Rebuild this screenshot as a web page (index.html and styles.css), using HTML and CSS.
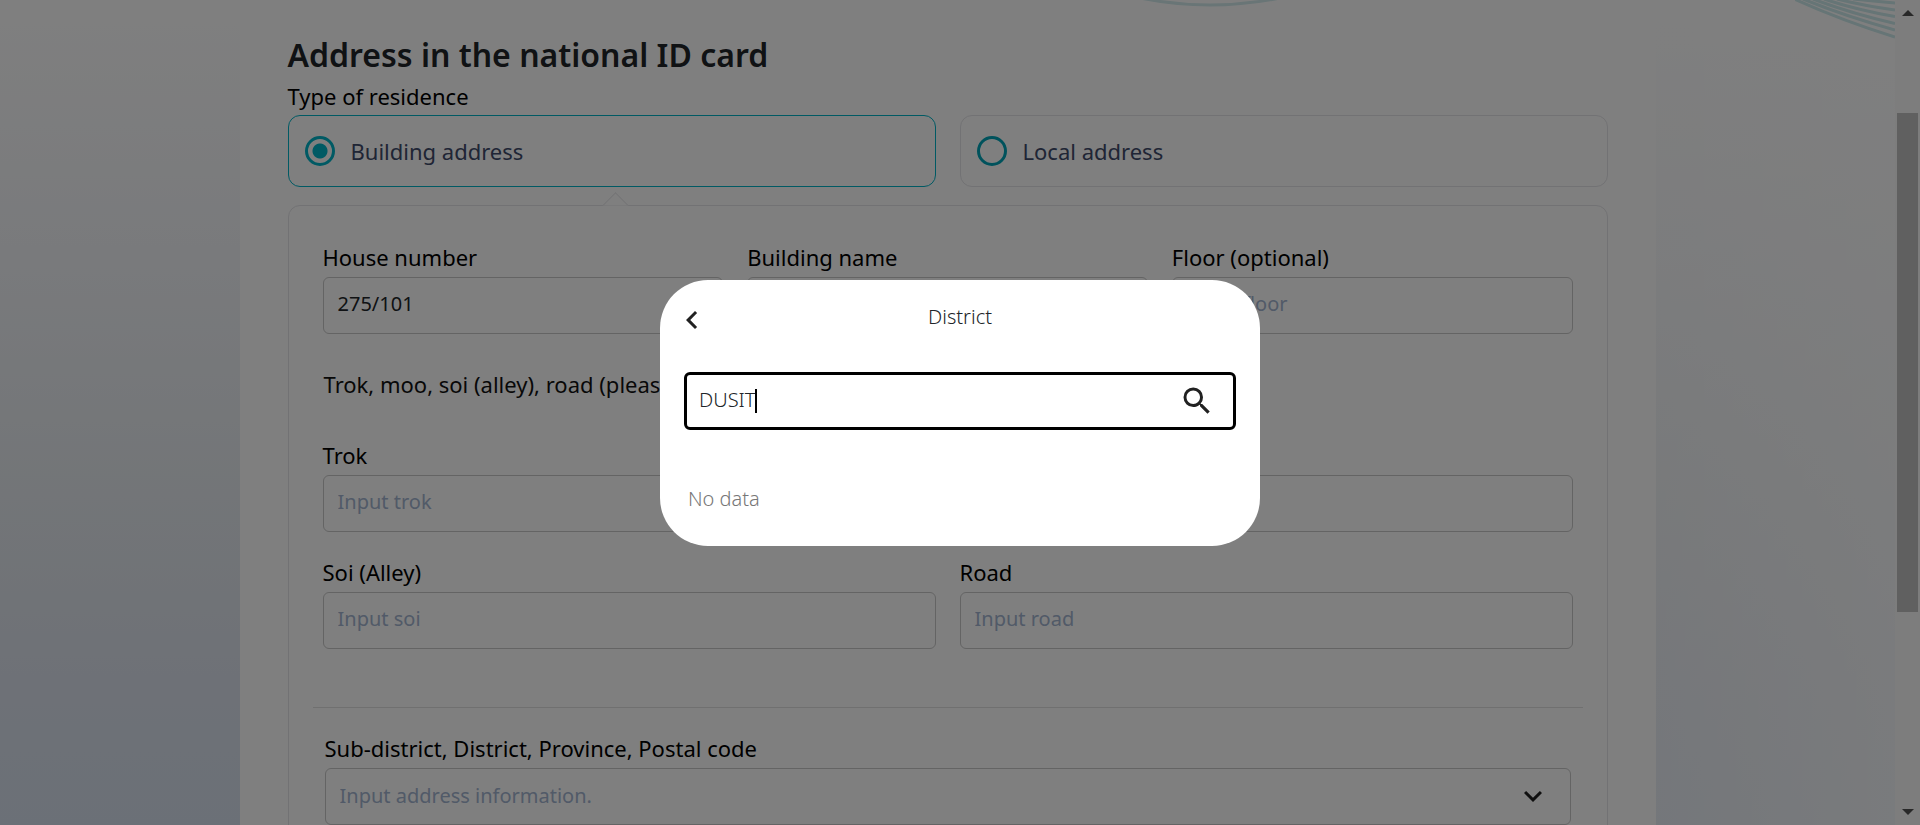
FILE: index.html
```html
<!DOCTYPE html>
<html lang="en">
<head>
<meta charset="utf-8">
<title>Address in the national ID card</title>
<link rel="stylesheet" href="styles.css">
</head>
<body>
<div class="page">
  <svg class="waves" width="100" height="40" viewBox="0 0 100 40" aria-hidden="true">
    <path d="M-3 -2Q45 20 100 37M8 -1Q50 16 100 30M18 -1Q55 13 100 23.500M29 -1Q62 10 100 16.500M42 -1Q70 6 100 10M58 -1Q78 1 100 3"/>
  </svg>
  <main class="card">
    <svg class="arc" width="140" height="8" viewBox="0 0 140 8" aria-hidden="true"><path d="M0 -2Q70 12 140 -2"/></svg>
    <form class="form">
      <h1 class="title">Address in the national ID card</h1>
      <fieldset class="residence">
        <legend class="label">Type of residence</legend>
        <div class="choices">
          <label class="choice choice-on"><input class="radio" type="radio" name="residence" checked>Building address</label>
          <label class="choice"><input class="radio" type="radio" name="residence">Local address</label>
        </div>
      </fieldset>
      <section class="panel">
        <div class="row">
          <div class="field"><label class="label" for="house">House number</label><input class="input" id="house" value="275/101"></div>
          <div class="field"><label class="label" for="building">Building name</label><input class="input" id="building"></div>
          <div class="field"><label class="label" for="floor">Floor (optional)</label><input class="input" id="floor" placeholder="Input floor"></div>
        </div>
        <p class="note">Trok, moo, soi (alley), road (please fill at least 1)</p>
        <div class="row">
          <div class="field"><label class="label" for="trok">Trok</label><input class="input" id="trok" placeholder="Input trok"></div>
          <div class="field"><label class="label" for="moo">Moo</label><input class="input" id="moo" placeholder="Input moo"></div>
        </div>
        <div class="row row-next">
          <div class="field"><label class="label" for="soi">Soi (Alley)</label><input class="input" id="soi" placeholder="Input soi"></div>
          <div class="field"><label class="label" for="road">Road</label><input class="input" id="road" placeholder="Input road"></div>
        </div>
        <hr class="rule">
        <div class="field area">
          <label class="label" for="area">Sub-district, District, Province, Postal code</label>
          <div class="select-wrap">
            <select class="input select" id="area"><option>Input address information.</option></select>
            <svg class="icon select-icon" viewBox="0 0 24 24" aria-hidden="true"><path d="M16.590 8.590 12 13.170 7.410 8.590 6 10l6 6 6-6z"/></svg>
          </div>
        </div>
      </section>
    </form>
  </main>
</div>
<div class="scrollbar" aria-hidden="true">
  <span class="arrow-up"></span><span class="thumb"></span><span class="arrow-down"></span>
</div>
<div class="overlay">
  <section class="modal" role="dialog" aria-labelledby="modal-title">
    <header class="modal-head">
      <button class="back" type="button" aria-label="Back"><svg class="icon" viewBox="0 0 24 24"><path d="M15.410 7.410 14 6l-6 6 6 6 1.410-1.410L10.830 12z"/></svg></button>
      <h2 class="modal-title" id="modal-title">District</h2>
    </header>
    <div class="search">
      <input class="search-input" aria-label="Search district" value="DUSIT">
      <span class="caret"></span>
      <button class="search-button" type="button" aria-label="Search"><svg class="icon" viewBox="0 0 24 24"><path d="M15.500 14h-.79l-.28-.27A6.471 6.471 0 0 0 16 9.500 6.500 6.500 0 1 0 9.500 16c1.610 0 3.090-.59 4.230-1.570l.27.28v.79l5 4.990L20.490 19l-4.990-5zm-6 0C7.010 14 5 11.990 5 9.500S7.010 5 9.500 5 14 7.010 14 9.500 11.990 14 9.500 14z"/></svg></button>
    </div>
    <p class="empty">No data</p>
  </section>
</div>
</body>
</html>
```

FILE: styles.css
```css
* { box-sizing: border-box; }

body {
  margin: 0;
  height: 100vh;
  overflow: hidden;
  display: flex;
  font-family: "Noto Sans", "Open Sans", sans-serif;
  font-size: 20px;
  color: #212529;
  background: #fff;
}

.page {
  position: relative;
  flex: 1;
  min-width: 0;
  display: flex;
  justify-content: center;
  background:
    linear-gradient(90deg, rgba(255, 255, 255, 0) 50%, rgba(255, 255, 255, .3) 80%, rgba(255, 255, 255, .7)),
    linear-gradient(180deg, #fff 0%, #f3f5f9 30%, #e6ebf0 60%, #dde3ee 82%, #d7e1ee 100%);
}

.waves {
  position: absolute;
  top: 0;
  right: 0;
  fill: none;
  stroke: #cdeaec;
  stroke-width: 3;
}

.card {
  position: relative;
  width: calc(100% - 479px);
  padding: 32px 48px 0;
  background: #fff;
}

.arc {
  position: absolute;
  top: 0;
  left: 900px;
  fill: none;
  stroke: #d2ebed;
  stroke-width: 3;
}

.title {
  margin: 0 0 2px;
  font-size: 32px;
  line-height: 46px;
  font-weight: 600;
}

.label, .note {
  display: block;
  padding: 0;
  font-size: 22px;
  line-height: 32px;
  color: #000;
}

.residence { margin: 0; padding: 0; border: 0; }

.choices { display: flex; gap: 24px; padding-top: 3px; }

.choice {
  flex: 1;
  display: flex;
  align-items: center;
  gap: 16px;
  height: 72px;
  padding: 0 16px;
  border: 1px solid #e4e4e8;
  border-radius: 12px;
  font-size: 22px;
  color: #404b6b;
}

.choice-on { border-color: #00b4c8; }

.radio {
  appearance: none;
  width: 30px;
  height: 30px;
  margin: 0;
  border: 3px solid #00a5b8;
  border-radius: 50%;
}

.radio:checked {
  border-color: #00b4c8;
  background: radial-gradient(circle, #00b4c8 7px, transparent 8px);
}

.panel {
  position: relative;
  margin-top: 18px;
  padding: 35px 34px 40px;
  border: 1px solid #e4e4e8;
  border-radius: 12px;
}

.panel::before {
  content: "";
  position: absolute;
  top: -10px;
  left: 317px;
  width: 18px;
  height: 18px;
  border: 1px solid #e4e4e8;
  border-width: 1px 0 0 1px;
  background: #fff;
  transform: rotate(45deg);
  clip-path: polygon(0 0, 100% 0, 0 100%);
}

.row { display: flex; gap: 24px; }
.row-next { margin-top: 24px; }

.field {
  flex: 1;
  min-width: 0;
  display: flex;
  flex-direction: column;
  gap: 4px;
}

.input {
  width: 100%;
  height: 57px;
  padding: 0 14px 4px;
  border: 1px solid #c8c8c8;
  border-radius: 6px;
  background: #fff;
  font: inherit;
  color: #212529;
}

.input::placeholder { color: #a3b4d0; opacity: 1; }

.note { margin: 34px 1px 39px; color: #111; }

.rule {
  margin: 58px -10px 24px;
  border: 0;
  border-top: 1px solid #e0e0e0;
}

.area { padding: 0 2px; }
.select-wrap { position: relative; }
.select { appearance: none; padding-bottom: 2px; color: #a3b4d0; }

.icon { display: block; width: 36px; height: 36px; fill: #212121; }

.select-icon { position: absolute; right: 20px; top: 10px; pointer-events: none; }

.scrollbar {
  width: 25px;
  padding: 10px 2px;
  display: flex;
  flex-direction: column;
  align-items: center;
  background: #fafafa;
}

.arrow-up, .arrow-down { border: 6px solid transparent; }
.arrow-up { border-top: 0; border-bottom-color: #505050; }
.arrow-down { margin-top: auto; border-bottom: 0; border-top-color: #505050; }
.thumb { width: 21px; height: 62%; margin-top: 97px; background: #c1c1c1; }

.overlay {
  position: fixed;
  inset: 0;
  display: flex;
  align-items: center;
  justify-content: center;
  background: rgba(0, 0, 0, .5);
}

.modal {
  width: 600px;
  padding: 22px 24px 32px;
  border-radius: 48px;
  background: #fff;
}

.modal-head { position: relative; height: 70px; }

.modal-title {
  margin: 0;
  font-size: 20px;
  line-height: 30px;
  font-weight: 300;
  text-align: center;
}

.back, .search-button {
  padding: 0;
  border: 0;
  background: none;
}

.back { position: absolute; left: -10px; top: 0; }

.search {
  position: relative;
  display: flex;
  align-items: center;
  height: 58px;
  padding: 0 18px 0 12px;
  border: 3px solid #000;
  border-radius: 6px;
}

.search-input {
  flex: 1;
  min-width: 0;
  height: 100%;
  padding: 0 0 2px;
  border: 0;
  outline: 0;
  background: none;
  font: inherit;
  font-weight: 300;
  color: #212529;
}

.caret {
  position: absolute;
  left: 68px;
  top: 14px;
  width: 2px;
  height: 24px;
  background: #000;
}

.empty {
  margin: 54px 4px 0;
  line-height: 30px;
  font-weight: 300;
  color: #777;
}
```
